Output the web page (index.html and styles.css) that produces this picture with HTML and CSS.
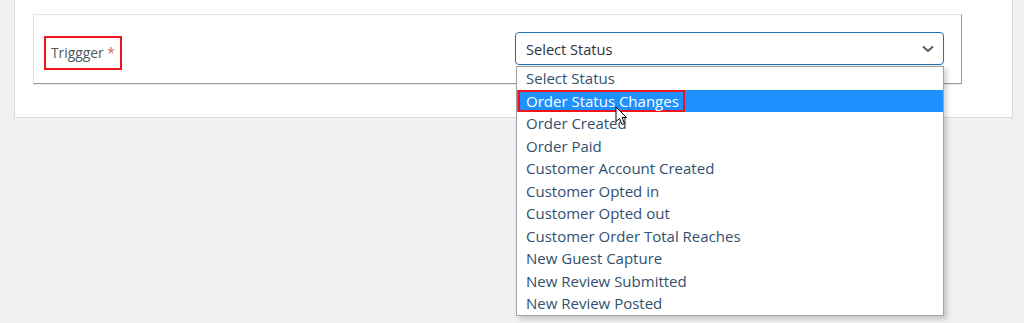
FILE: index.html
```html
<!DOCTYPE html>
<html lang="en">
<head>
    <meta charset="UTF-8">
    <meta name="viewport" content="width=device-width, initial-scale=1.0">
    <title>Trigger settings</title>
    <link rel="stylesheet" href="styles.css">
</head>
<body>
    <div class="card">
        <div class="panel">
            <div class="label-col">
                <label class="trigger-label">Triggger <span class="req">*</span></label>
            </div>
            <div class="select-wrap">
                <div class="select">
                    <span>Select Status</span>
                    <svg class="chevron" width="12" height="8" viewBox="0 0 12 8"><path d="M1 1.5 L6 6 L11 1.5" fill="none" stroke="#50575e" stroke-width="2"/></svg>
                </div>
                <ul class="options">
                    <li>Select Status</li>
                    <li class="active"><span class="marked">Order Status Changes</span></li>
                    <li>Order Created</li>
                    <li>Order Paid</li>
                    <li>Customer Account Created</li>
                    <li>Customer Opted in</li>
                    <li>Customer Opted out</li>
                    <li>Customer Order Total Reaches</li>
                    <li>New Guest Capture</li>
                    <li>New Review Submitted</li>
                    <li>New Review Posted</li>
                </ul>
                <svg class="cursor" width="13" height="20" viewBox="0 0 13 20"><path d="M1 1 L1 15.5 L4.5 12.5 L7 18.5 L9.5 17.5 L7 11.5 L11.5 11.5 Z" fill="#fff" stroke="#000" stroke-width="1"/></svg>
            </div>
        </div>
    </div>
</body>
</html>
```

FILE: styles.css
```css
body{
    margin: 0;
    padding: 0;
    background-color: #f0f0f1;
    font-family: "Open Sans", "Noto Sans", sans-serif;
    height: 323px;
    overflow: hidden;
}
.card{
    margin: 0 11px 0 14px;
    background-color: #fff;
    border: 1px solid #dcdcde;
    border-top: none;
    padding: 14px 50px 33px 18px;
}
.panel{
    display: flex;
    align-items: flex-start;
    height: 51px;
    padding: 17px 17px 0 10px;
    border: 1px solid #e4e4e4;
    border-right-color: #9a9a9a;
    border-bottom-color: #9a9a9a;
    box-shadow: 0 1px 1px rgba(0,0,0,0.08);
}
.label-col{
    flex: 0 0 471px;
}
.trigger-label{
    display: inline-block;
    margin-top: 4px;
    box-sizing: border-box;
    height: 34px;
    width: 78px;
    padding-left: 5px;
    border: 2px solid #f0141a;
    font-size: 13.8px;
    line-height: 30px;
    color: #50575e;
}
.req{
    color: #d46a6c;
}
.select-wrap{
    position: relative;
    flex: 1;
}
.select{
    display: flex;
    align-items: center;
    justify-content: space-between;
    box-sizing: border-box;
    height: 33px;
    padding: 0 9px 0 10px;
    border: 1px solid #2271b1;
    border-radius: 4px;
    box-shadow: 0 1px 2px rgba(0,0,0,0.08);
    font-size: 14.6px;
    color: #2c3338;
}
.options{
    position: absolute;
    top: 34px;
    left: 1px;
    right: 0;
    margin: 0;
    padding: 0;
    list-style: none;
    background-color: #fff;
    border: 1px solid #a3a3a3;
    box-shadow: 3px 3px 5px rgba(0,0,0,0.18);
    z-index: 2;
}
.options li{
    height: 22.5px;
    line-height: 22.5px;
    padding-left: 9px;
    font-size: 15px;
    color: #32506e;
    white-space: nowrap;
}
.options li.active{
    background-color: #1e90ff;
    padding-left: 1px;
}
.marked{
    display: inline-block;
    box-sizing: border-box;
    height: 22.5px;
    line-height: 18.5px;
    padding: 0 4px 0 6px;
    border: 2px solid #f0141a;
    color: #fff;
}
.cursor{
    position: absolute;
    top: 74px;
    left: 100px;
    z-index: 3;
}
```
